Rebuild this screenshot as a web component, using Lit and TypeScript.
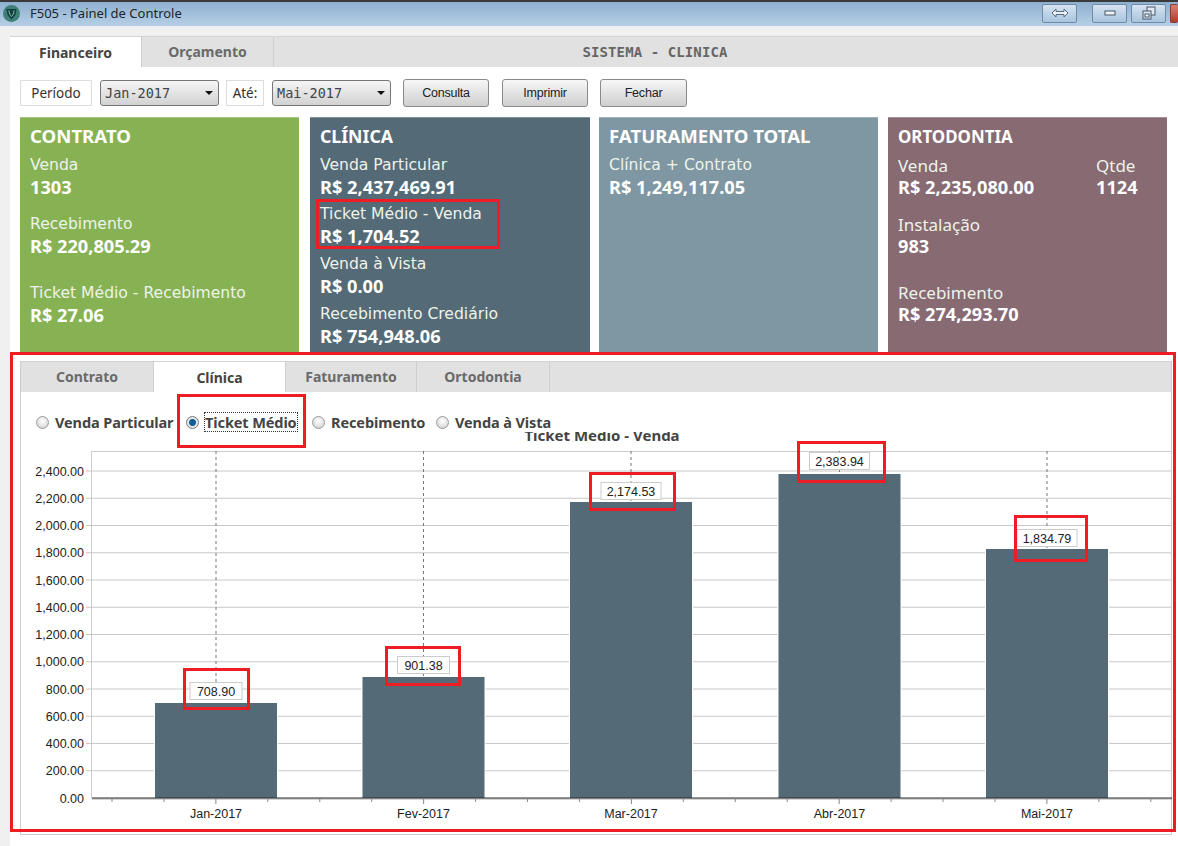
import { LitElement, html, css, svg } from "lit";
import { customElement } from "lit/decorators.js";

type Stat = { label: string; value: string; top: number; side?: { label: string; value: string } };
type Card = { title: string; cls: string; stats: Stat[] };

const CARDS: Card[] = [
  { title: "CONTRATO", cls: "green", stats: [
    { label: "Venda", value: "1303", top: 0 },
    { label: "Recebimento", value: "R$ 220,805.29", top: 13 },
    { label: "Ticket Médio - Recebimento", value: "R$ 27.06", top: 23 },
  ]},
  { title: "CLÍNICA", cls: "slate", stats: [
    { label: "Venda Particular", value: "R$ 2,437,469.91", top: 0 },
    { label: "Ticket Médio - Venda", value: "R$ 1,704.52", top: -4 },
    { label: "Venda à Vista", value: "R$ 0.00", top: -3 },
    { label: "Recebimento Crediário", value: "R$ 754,948.06", top: -3 },
  ]},
  { title: "FATURAMENTO TOTAL", cls: "steel", stats: [
    { label: "Clínica + Contrato", value: "R$ 1,249,117.05", top: 0 },
  ]},
  { title: "ORTODONTIA", cls: "mauve", stats: [
    { label: "Venda", value: "R$ 2,235,080.00", top: 1, side: { label: "Qtde", value: "1124" } },
    { label: "Instalação", value: "983", top: 13 },
    { label: "Recebimento", value: "R$ 274,293.70", top: 22 },
  ]},
];

const BARS = [
  { m: "Jan-2017", v: "708.90", cx: 216, top: 703, lw: 53, ly: 691 },
  { m: "Fev-2017", v: "901.38", cx: 423.5, top: 677, lw: 53, ly: 665 },
  { m: "Mar-2017", v: "2,174.53", cx: 631, top: 502, lw: 61, ly: 491 },
  { m: "Abr-2017", v: "2,383.94", cx: 839.5, top: 474, lw: 61, ly: 461 },
  { m: "Mai-2017", v: "1,834.79", cx: 1047, top: 549, lw: 61, ly: 538 },
];

const REDS = [
  { x: 10, y: 352, w: 1166, h: 480, t: 3 },
  { x: 316, y: 199, w: 184, h: 50, t: 3 },
  { x: 177, y: 394, w: 129, h: 54, t: 3 },
  { x: 183, y: 668, w: 67, h: 42, t: 3 },
  { x: 385, y: 646, w: 76, h: 40, t: 3 },
  { x: 589, y: 472, w: 87, h: 39, t: 3 },
  { x: 797, y: 441, w: 89, h: 42, t: 3 },
  { x: 1014, y: 515, w: 74, h: 47, t: 3 },
];

const RADIOS = [
  { t: "Venda Particular", on: false },
  { t: "Ticket Médio", on: true },
  { t: "Recebimento", on: false },
  { t: "Venda à Vista", on: false },
];

@customElement("app-root")
export class AppRoot extends LitElement {
  static styles = css`
    :host { display: block; width: 1178px; height: 846px; overflow: hidden; position: relative; background: #f0f0f0; font-family: "DejaVu Sans", sans-serif; }
    .titlebar { height: 22px; padding: 0 0 2px 3px; border-top: 2px solid #3a3a3a; background: linear-gradient(#8eb0cf, #b6cfe6); display: flex; align-items: center; }
    .logo { width: 17px; height: 17px; flex: none; }
    .wtitle { font: 13px "Noto Sans", sans-serif; color: #1c2430; margin-left: 10px; flex: 1; }
    .wbtn { width: 35px; height: 19px; border: 1px solid #6f8ba8; border-radius: 2px; background: linear-gradient(#d6e4f1, #a9c4de); display: flex; align-items: center; justify-content: center; margin-left: 4px; flex: none; box-sizing: border-box; }
    .wbtn svg { display: block; }
    .wbtn.first { margin-right: 11px; }
    .wbtn.close { width: 8px; background: linear-gradient(#d9806f, #b53a2b); border-color: #8d3b30; margin-left: 4px; border-right: 0; }
    .main { margin: 10px 0 0 10px; background: #fff; height: 810px; }
    .tabs { display: flex; background: #e1e1e1; border-top: 1px solid #d3d3d3; height: 30px; color: #6a6a6a; font: bold 14px "Noto Sans", sans-serif; }
    .tab { width: 132px; display: flex; align-items: center; justify-content: center; border-right: 1px solid #cfcfcf; box-sizing: border-box; padding-bottom: 2px; }
    .tab.on { background: #fff; color: #444; padding-bottom: 0; }
    .sys { flex: 1; text-align: center; align-self: center; font: bold 14px "DejaVu Sans Mono", monospace; letter-spacing: 0.1px; color: #666; padding-right: 142px; }
    .toolbar { display: flex; align-items: center; padding: 13px 0 0 10px; height: 26px; font: 13.5px "Noto Sans", sans-serif; color: #333; }
    .lbl { height: 26px; background: #fff; border: 1px solid #ddd; box-sizing: border-box; display: flex; align-items: center; justify-content: center; flex: none; }
    .lbl.p { width: 72px; margin-right: 8px; }
    .lbl.a { width: 38px; margin: 0 8px 0 7px; }
    .sel { width: 119px; height: 26px; box-sizing: border-box; border: 1px solid #777; border-radius: 3px; background: linear-gradient(#f6f6f6, #d2d2d2); display: flex; align-items: center; justify-content: space-between; padding: 0 5px 0 4px; font: 13.5px "DejaVu Sans Mono", monospace; color: #444; flex: none; }
    .caret { width: 0; height: 0; border-left: 4px solid transparent; border-right: 4px solid transparent; border-top: 4px solid #111; }
    .btn { width: 86px; height: 28px; box-sizing: border-box; border: 1px solid #8a8a8a; border-radius: 3px; background: linear-gradient(#f7f7f7, #cfcfcf); display: flex; align-items: center; justify-content: center; font: 12.5px "Liberation Sans", sans-serif; letter-spacing: -0.2px; color: #222; flex: none; }
    .btn.b1 { margin-left: 12px; }
    .btn.b2 { margin-left: 13px; }
    .btn.b3 { margin-left: 12px; width: 87px; }
    .cards { display: grid; grid-template-columns: 290px 289px 289px 279px; margin: 11px 0 0 10px; height: 235px; }
    .card { color: #fff; padding: 7px 10px 0; box-sizing: border-box; width: 279px; height: 235px; overflow: hidden; border-top: 1px solid rgba(255,255,255,.25); }
    .card.slate { width: 280px; }
    .green { background: #86b254; }
    .slate { background: #546a76; }
    .steel { background: #7f97a2; }
    .mauve { background: #876a72; }
    .ctitle { font: bold 18.6px/22px "Noto Sans", sans-serif; white-space: nowrap; }
    .slate .ctitle { font-size: 17.7px; }
    .mauve .ctitle { font-size: 16.9px; line-height: 23px; }
    .clabel { font: 15.6px/23px "DejaVu Sans", sans-serif; color: #eef3ea; margin-top: 7px; white-space: nowrap; }
    .cval { font: bold 18.2px/25px "Noto Sans", sans-serif; white-space: nowrap; margin-top: -2px; }
    .mauve .clabel { font: 17px/23px "Noto Sans", sans-serif; margin-top: 6px; }
    .mauve .row .clabel { margin-top: 5px; }
    .row { display: flex; }
    .row > div:first-child { width: 198px; }
    .lower { margin: 9px 6px 0 10px; height: 474px; border: 1px solid #ccc; border-top: 0; box-sizing: border-box; background: #fff; display: flex; flex-direction: column; }
    .lower .tabs { flex: none; }
    .radios { height: 40px; display: flex; align-items: flex-start; padding-top: 18px; box-sizing: border-box; font: bold 14.5px/24px "Noto Sans", sans-serif; color: #444; flex: none; }
    .radio { display: flex; align-items: center; flex: none; height: 24px; white-space: nowrap; overflow: visible; }
    .radio:nth-child(1) { margin-left: 15px; width: 150px; }
    .radio:nth-child(2) { width: 126px; }
    .radio:nth-child(3) { width: 124px; }
    .dot { width: 13px; height: 13px; border-radius: 50%; border: 1px solid #999; box-sizing: border-box; background: radial-gradient(circle at 50% 35%, #fff, #ccc); margin-right: 6px; flex: none; }
    .dot.on { background: radial-gradient(circle, #0e5f96 0 3px, #e6e6e6 4px); border-color: #777; }
    .focus { outline: 1px dotted #333; outline-offset: 0; line-height: 18px; }
    .radio .txt { letter-spacing: -0.1px; }
    .chart { display: block; flex: none; width: 1151px; height: 402px; }
    .chart text { font-family: "Liberation Sans", sans-serif; font-size: 12.5px; fill: #222; }
    .chart text.ct { font: bold 15px "Noto Sans", sans-serif; fill: #444; }
    .red { position: absolute; border-style: solid; border-color: #ee1c25; box-sizing: border-box; pointer-events: none; }
  `;

  renderCard(c: Card) {
    return html`<div class="card ${c.cls}">
      <div class="ctitle">${c.title}</div>
      ${c.stats.map(s => html`<div style="margin-top:${s.top}px">
        ${s.side
          ? html`<div class="row"><div><div class="clabel">${s.label}</div><div class="cval">${s.value}</div></div>
              <div><div class="clabel">${s.side.label}</div><div class="cval">${s.side.value}</div></div></div>`
          : html`<div class="clabel">${s.label}</div><div class="cval">${s.value}</div>`}
      </div>`)}
    </div>`;
  }

  renderChart() {
    const yOf = (v: number) => 798 - v * 0.13625;
    const grid = Array.from({ length: 12 }, (_, i) => i * 200 + 200);
    const label = (v: number) => (v >= 1000 ? `${Math.floor(v / 1000)},${String(v % 1000).padStart(3, "0")}.00` : `${v}.00`);
    const ticks: number[] = [];
    for (let x = 112; x < 1172; x += 51.94) ticks.push(x);
    return html`<svg class="chart" viewBox="21 432 1151 402">
      ${svg`
      <text class="ct" x="602" y="441" text-anchor="middle">Ticket Médio - Venda</text>
      <line x1="92" y1="451.5" x2="1172" y2="451.5" stroke="#ccc"/>
      <line x1="91.5" y1="451" x2="91.5" y2="798" stroke="#ccc"/>
      ${grid.map(v => svg`<line x1="86" x2="1172" y1="${yOf(v)}" y2="${yOf(v)}" stroke="#c8c8c8"/>`)}
      ${[0, ...grid].map(v => svg`<text x="84" y="${yOf(v) + 4.5}" text-anchor="end">${label(v)}</text>`)}
      ${BARS.map(b => svg`
        <line x1="${b.cx}" x2="${b.cx}" y1="451" y2="${b.top}" stroke="#777" stroke-dasharray="3 3"/>
        <rect x="${b.cx - 62}" y="${b.top - 1}" width="124" height="${798 - b.top + 1}" fill="#fff"/>
        <rect x="${b.cx - 61}" y="${b.top}" width="122" height="${798 - b.top}" fill="#546a76"/>
        <rect x="${b.cx - b.lw / 2 + 0.5}" y="${b.ly - 8.5}" width="${b.lw - 1}" height="17" fill="#fff" stroke="#ccc"/>
        <text x="${b.cx}" y="${b.ly + 4.5}" text-anchor="middle">${b.v}</text>
        <text x="${b.cx}" y="818" text-anchor="middle">${b.m}</text>
      `)}
      <line x1="92" x2="1172" y1="799" y2="799" stroke="#aaa"/>
      <line x1="92" x2="1172" y1="798" y2="798" stroke="#2a2a2a" stroke-width="1.2"/>
      ${ticks.map((x, i) => svg`<line x1="${x}" x2="${x}" y1="799" y2="${i % 4 === 2 ? 804 : 802}" stroke="#888"/>`)}
      `}
    </svg>`;
  }

  render() {
    return html`
      <div class="titlebar">
        <svg class="logo" viewBox="0 0 17 17">
          <circle cx="8.5" cy="8.5" r="8.5" fill="#3f7f78"/>
          <path d="M3.500 4h10l-1 6-4 4.500-4-4.500z" fill="#12423e"/>
          <path d="M6 5.500c0 3 1.500 5 2.500 6 1-1 2.500-3 2.500-6" fill="none" stroke="#8fc4b8" stroke-width="1"/>
        </svg>
        <div class="wtitle">F505 - Painel de Controle</div>
        <div class="wbtn first"><svg width="18" height="12" viewBox="0 0 18 12"><path d="M1 6l4-4v2.500h8V2l4 4-4 4V7.500H5V10z" fill="#e8eff6" stroke="#5a6a7a"/></svg></div>
        <div class="wbtn"><svg width="12" height="8" viewBox="0 0 12 8"><rect x="1" y="2" width="10" height="4" fill="#eef3f8" stroke="#44566a"/></svg></div>
        <div class="wbtn"><svg width="14" height="14" viewBox="0 0 14 14"><rect x="5" y="1" width="8" height="8" fill="#dfe8f1" stroke="#44566a"/><rect x="1" y="5" width="8" height="8" fill="#dfe8f1" stroke="#44566a"/><rect x="3" y="8" width="4" height="3" fill="#fff" stroke="#44566a"/></svg></div>
        <div class="wbtn close"></div>
      </div>
      <div class="main">
        <div class="tabs">
          <div class="tab on">Financeiro</div>
          <div class="tab">Orçamento</div>
          <div class="sys">SISTEMA - CLINICA</div>
        </div>
        <div class="toolbar">
          <div class="lbl p">Período</div>
          <div class="sel">Jan-2017<span class="caret"></span></div>
          <div class="lbl a">Até:</div>
          <div class="sel">Mai-2017<span class="caret"></span></div>
          <div class="btn b1">Consulta</div>
          <div class="btn b2">Imprimir</div>
          <div class="btn b3">Fechar</div>
        </div>
        <div class="cards">${CARDS.map(c => this.renderCard(c))}</div>
        <div class="lower">
          <div class="tabs">
            <div class="tab" style="width:133px">Contrato</div>
            <div class="tab on">Clínica</div>
            <div class="tab" style="width:131px">Faturamento</div>
            <div class="tab" style="width:133px">Ortodontia</div>
          </div>
          <div class="radios">
            ${RADIOS.map(r => html`<div class="radio"><span class="dot ${r.on ? "on" : ""}"></span><span class="txt ${r.on ? "focus" : ""}">${r.t}</span></div>`)}
          </div>
          ${this.renderChart()}
        </div>
      </div>
      ${REDS.map(r => html`<div class="red" style="left:${r.x}px;top:${r.y}px;width:${r.w}px;height:${r.h}px;border-width:${r.t}px"></div>`)}
    `;
  }
}
